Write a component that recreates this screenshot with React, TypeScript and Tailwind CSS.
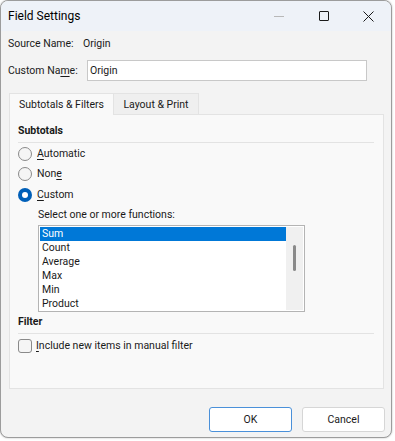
import React from "react";

const font = { fontFamily: 'Roboto, "Noto Sans", Arial, sans-serif' };

function U({ children }: { children: React.ReactNode }) {
  return <span className="underline underline-offset-[2px] decoration-[1px]">{children}</span>;
}

function Radio({ checked }: { checked?: boolean }) {
  if (checked) {
    return (
      <span className="w-[14px] h-[14px] rounded-full bg-[#005fb8] flex items-center justify-center shrink-0">
        <span className="w-[6px] h-[6px] rounded-full bg-white" />
      </span>
    );
  }
  return <span className="w-[14px] h-[14px] rounded-full border border-[#8a8a8a] bg-[#f5f5f5] shrink-0" />;
}

export default function App() {
  const items = ["Sum", "Count", "Average", "Max", "Min", "Product"];
  return (
    <div className="w-[395px] h-[441px] bg-white text-[10.5px] leading-[16px] text-[#1a1a1a] whitespace-nowrap" style={font}>
      <div className="w-[392px] h-[438px] rounded-[8px] border border-[#9c9c9c] bg-[#f3f3f3] flex flex-col overflow-hidden shadow-[0_0_2px_rgba(0,0,0,0.3)]">
        {/* Title bar */}
        <div className="h-[30px] bg-[#eef2f8] flex items-center shrink-0">
          <div className="pl-[7px] text-[12px] text-black flex-1">Field Settings</div>
          <div className="w-[45px] h-full flex items-center justify-center">
            <span className="w-[10px] h-px bg-[#b8b8b8]" />
          </div>
          <div className="w-[45px] h-full flex items-center justify-center">
            <span className="w-[10px] h-[10px] border border-[#1a1a1a] rounded-[1px]" />
          </div>
          <div className="w-[45px] h-full flex items-center justify-center">
            <svg width="11" height="11" viewBox="0 0 11 11">
              <path d="M0.5 0.5 L10.5 10.5 M10.5 0.5 L0.5 10.5" stroke="#1a1a1a" strokeWidth="1" />
            </svg>
          </div>
        </div>

        {/* Body */}
        <div className="flex-1 flex flex-col px-[7px]">
          <div className="flex items-center h-[16px] mt-[5px]">
            <span className="w-[75px]">Source Name:</span>
            <span>Origin</span>
          </div>
          <div className="flex items-center mt-[8px] h-[21px]">
            <span className="w-[79px]">
              Custom Na<U>m</U>e:
            </span>
            <div className="w-[280px] h-[21px] bg-white border border-[#c8c8c8] flex items-center px-[2px]">Origin</div>
          </div>

          {/* Tabs */}
          <div className="flex mt-[11px] ml-[1px] h-[22px] items-end">
            <div className="w-[105px] h-[22px] bg-[#f9f9f9] border border-b-0 border-[#e3e3e3] flex items-center justify-center relative z-10 -mb-px">
              Subtotals &amp; Filters
            </div>
            <div className="w-[85px] h-[21px] bg-[#efefef] border border-l-0 border-b-0 border-[#e3e3e3] flex items-center justify-center pt-[2px]">
              Layout &amp; Print
            </div>
          </div>

          {/* Panel */}
          <div className="ml-[1px] w-[375px] h-[275px] bg-[#f9f9f9] border border-[#e3e3e3] px-[8px] flex flex-col">
            <div className="font-bold mt-[8px] h-[16px]">Subtotals</div>
            <div className="h-px bg-[#e3e3e3] mt-[3px] mr-[1px]" />
            <div className="flex items-center gap-[5px] mt-[3px] h-[16px]">
              <Radio />
              <span>
                <U>A</U>utomatic
              </span>
            </div>
            <div className="flex items-center gap-[5px] mt-[4px] h-[16px]">
              <Radio />
              <span>
                Non<U>e</U>
              </span>
            </div>
            <div className="flex items-center gap-[5px] mt-[5px] h-[16px]">
              <Radio checked />
              <span>
                <U>C</U>ustom
              </span>
            </div>
            <div className="ml-[20px] mt-[4px] h-[16px]">Select one or more functions:</div>
            <div className="ml-[20px] mt-[2px] w-[267px] h-[87px] border border-[#b4b4b4] bg-white flex p-px">
              <div className="flex-1 flex flex-col">
                {items.map((it, i) => (
                  <div
                    key={it}
                    className={
                      "h-[14px] leading-[14px] pl-[2px] " + (i === 0 ? "bg-[#0078d7] text-white" : "")
                    }
                  >
                    {it}
                  </div>
                ))}
              </div>
              <div className="w-[17px] bg-[#f0f0f0] flex justify-center pt-[18px]">
                <span className="w-[3px] h-[26px] rounded-full bg-[#8a8a8a]" />
              </div>
            </div>
            <div className="font-bold mt-[2px] h-[16px]">Filter</div>
            <div className="h-px bg-[#e3e3e3] mt-[3px] mr-[1px]" />
            <div className="flex items-center gap-[4px] mt-[4px] h-[16px]">
              <span className="w-[14px] h-[14px] rounded-[3px] border border-[#8a8a8a] bg-[#f5f5f5] shrink-0" />
              <span>
                <U>I</U>nclude new items in manual filter
              </span>
            </div>
          </div>

          {/* Buttons */}
          <div className="flex justify-end gap-[10px] mt-[18px] mr-[-1px]">
            <div className="w-[83px] h-[25px] bg-white border border-[#4a90d9] rounded-[3px] flex items-center justify-center">
              OK
            </div>
            <div className="w-[83px] h-[25px] bg-white border border-[#d6d6d6] rounded-[3px] flex items-center justify-center">
              Cancel
            </div>
          </div>
        </div>
      </div>
    </div>
  );
}
